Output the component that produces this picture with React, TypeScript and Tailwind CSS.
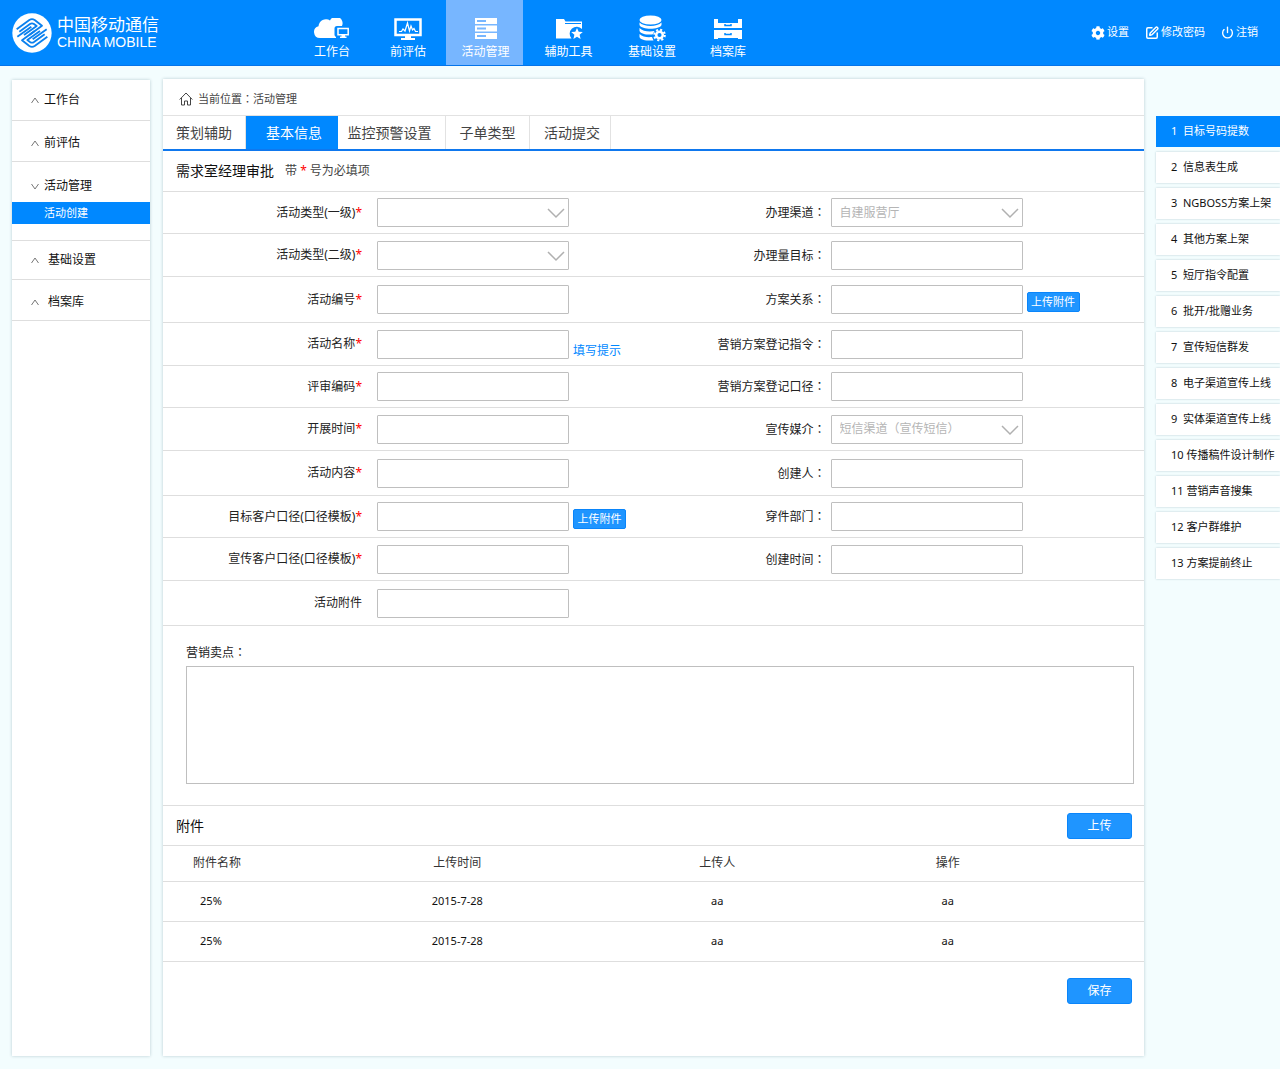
import type { ReactNode } from "react";
import { Power, SquarePen } from "lucide-react";
import { FaCog } from "react-icons/fa";

type NavItem = {
  label: string;
  icon: ReactNode;
  className: string;
};

type Field = {
  id: string;
  label: string;
  required?: boolean;
  colon?: boolean;
  options?: string[];
  extra?: "upload" | "hint";
};

type FieldRow = {
  height: string;
  left: Field;
  right?: Field;
};

const navItems: NavItem[] = [
  { label: "工作台", icon: <CloudIcon />, className: "w-[76px]" },
  { label: "前评估", icon: <PulseIcon />, className: "w-[76px]" },
  { label: "活动管理", icon: <ServerIcon />, className: "w-[77px] bg-[#77b6ff] pl-0.5" },
  { label: "辅助工具", icon: <FolderIcon />, className: "mx-[7px] w-[77px]" },
  { label: "基础设置", icon: <DatabaseIcon />, className: "w-[76px]" },
  { label: "档案库", icon: <CabinetIcon />, className: "w-[76px]" },
];

const tabs = [
  { label: "策划辅助", className: "w-[83px] border-r border-[#e2e2e2]" },
  { label: "基本信息", className: "w-[92px] bg-[#0088ff] pl-1 text-white" },
  { label: "监控预警设置", className: "w-[108px] border-r border-[#e2e2e2] pr-1" },
  { label: "子单类型", className: "w-[84px] border-r border-[#e2e2e2]" },
  { label: "活动提交", className: "w-[81px] border-r border-[#e2e2e2] pl-1" },
];

const rows: FieldRow[] = [
  {
    height: "h-[42px]",
    left: { id: "type1", label: "活动类型(一级)", required: true, options: [""] },
    right: { id: "channel", label: "办理渠道", colon: true, options: ["自建服营厅"] },
  },
  {
    height: "h-[43px]",
    left: { id: "type2", label: "活动类型(二级)", required: true, options: [""] },
    right: { id: "target", label: "办理量目标", colon: true },
  },
  {
    height: "h-[46px]",
    left: { id: "code", label: "活动编号", required: true },
    right: { id: "relation", label: "方案关系", colon: true, extra: "upload" },
  },
  {
    height: "h-[43px]",
    left: { id: "name", label: "活动名称", required: true, extra: "hint" },
    right: { id: "command", label: "营销方案登记指令", colon: true },
  },
  {
    height: "h-[42px]",
    left: { id: "review", label: "评审编码", required: true },
    right: { id: "caliber", label: "营销方案登记口径", colon: true },
  },
  {
    height: "h-[43px]",
    left: { id: "start", label: "开展时间", required: true },
    right: { id: "media", label: "宣传媒介", colon: true, options: ["短信渠道（宣传短信）"] },
  },
  {
    height: "h-[45px]",
    left: { id: "content", label: "活动内容", required: true },
    right: { id: "creator", label: "创建人", colon: true },
  },
  {
    height: "h-[42px]",
    left: { id: "targetCustomer", label: "目标客户口径(口径模板)", required: true, extra: "upload" },
    right: { id: "department", label: "穿件部门", colon: true },
  },
  {
    height: "h-[43px]",
    left: { id: "adCustomer", label: "宣传客户口径(口径模板)", required: true },
    right: { id: "created", label: "创建时间", colon: true },
  },
  {
    height: "h-[45px]",
    left: { id: "attachment", label: "活动附件" },
  },
];

const steps = [
  "目标号码提数",
  "信息表生成",
  "NGBOSS方案上架",
  "其他方案上架",
  "短厅指令配置",
  "批开/批赠业务",
  "宣传短信群发",
  "电子渠道宣传上线",
  "实体渠道宣传上线",
  "传播稿件设计制作",
  "营销声音搜集",
  "客户群维护",
  "方案提前终止",
];

const files = [
  { name: "25%", time: "2015-7-28", user: "aa", action: "aa" },
  { name: "25%", time: "2015-7-28", user: "aa", action: "aa" },
];

function Logo() {
  return (
    <svg width="40" height="40" viewBox="0 0 120 120" aria-hidden="true">
      <circle cx="60" cy="60" r="59" fill="#fff" />
      <g fill="none" stroke="#0a80ee" strokeWidth="5.500" strokeLinejoin="round">
        <path d="M14 49 52 21q8-5 16 0l22 17-38 28" />
        <path d="M106 71 68 99q-8 5-16 0L30 82l38-28" />
        <path d="M22 56 54 33q6-4 12 0l8 6-38 27" />
        <path d="M98 64 66 87q-6 4-12 0l-8-6 38-27" />
        <path d="M104 49 62 79" />
        <path d="M16 71 58 41" />
      </g>
    </svg>
  );
}

function CloudIcon() {
  return (
    <svg width="36" height="22" viewBox="0 0 36 22" aria-hidden="true">
      <path
        fill="#fff"
        d="M6 20a6 6 0 0 1-1.500-11.800A7.500 7.500 0 0 1 16 2.500 6.500 6.500 0 0 1 28 8h-5a2.500 2.500 0 0 0-2.500 2.500v6A2.500 2.500 0 0 0 22 19v1z"
      />
      <path fill="none" stroke="#fff" strokeWidth="1.500" d="M24 10.500h10.200v6.300H24z" />
      <path fill="#fff" d="M27.500 17h3.500v1.500h1.500V20h-6.500v-1.500h1.500z" />
    </svg>
  );
}

function PulseIcon() {
  return (
    <svg width="28" height="22" viewBox="0 0 28 22" aria-hidden="true">
      <path fill="none" stroke="#fff" strokeWidth="2.500" d="M1.500 1.500h25v15.500h-25z" />
      <path
        fill="none"
        stroke="#fff"
        strokeWidth="1.200"
        d="M5 13.500h2.500L9 11l2 2 2.500-8 2 8 1.500-5 1.500 4 1.500-1.500 1.500 3H24"
      />
      <path fill="#fff" d="M11 18h6v2h4v2H7v-2h4z" />
    </svg>
  );
}

function ServerIcon() {
  return (
    <svg width="24" height="22" viewBox="0 0 24 22" aria-hidden="true">
      <path fill="#fff" d="M1 0h22v6H1zM1 7.500h22v6H1zM1 15h22v6H1z" />
      <path stroke="#77b6ff" strokeWidth="2" d="M3 3h9M3 10.500h9M3 18h9" />
    </svg>
  );
}

function FolderIcon() {
  return (
    <svg width="28" height="22" viewBox="0 0 28 22" aria-hidden="true">
      <path fill="#fff" d="M1 1h8l1.500 2.500H27V11a7 7 0 0 0-10.500 9.500H1z" />
      <path stroke="#0088ff" d="M10 5.500h16" />
      <path
        fill="#fff"
        d="m22 10 1.700 3.800 4.100.3-3.200 2.700 1 4.200-3.600-2.300-3.600 2.300 1-4.200-3.200-2.700 4.100-.3z"
      />
    </svg>
  );
}

function DatabaseIcon() {
  return (
    <svg width="27" height="27" viewBox="0 0 27 27" aria-hidden="true">
      <ellipse cx="11.500" cy="5" rx="11" ry="4.500" fill="#fff" />
      <path fill="#fff" d="M.5 7.500c4 4.500 18 4.500 22 0V10c-2 5-20 5-22 0z" />
      <path fill="#fff" d="M.5 13c3 3.500 10 4 15 3l-2 3.500C8 20 2 19 .5 16z" />
      <path fill="#fff" d="M.5 19c3 3 8 3.500 12.500 3l1.500 3.500C8 26 1.500 25 .5 22z" />
      <circle cx="20.500" cy="20" r="3.300" fill="none" stroke="#fff" strokeWidth="2.500" />
      <circle cx="20.500" cy="20" r="5.300" fill="none" stroke="#fff" strokeWidth="2" strokeDasharray="2.080 2.080" />
    </svg>
  );
}

function CabinetIcon() {
  return (
    <svg width="28" height="22" viewBox="0 0 28 22" aria-hidden="true">
      <path fill="#fff" d="M0 1h4v3h20V1h4v9H0zM0 12h28v9h-4v-1H4v1H0z" />
      <path stroke="#0088ff" d="M4 4.500h20M4 20.500h20" />
      <path fill="none" stroke="#0088ff" strokeWidth="1.500" d="M11 6v1.500h6V6M11 15v1.500h6V15" />
    </svg>
  );
}

function HomeIcon() {
  return (
    <svg width="14" height="14" viewBox="0 0 14 14" fill="none" stroke="#444" aria-hidden="true">
      <path d="M.7 7.500 7 1l6.300 6.500M2.500 6v7h3V9h3v4h3V6" />
    </svg>
  );
}

function Arrow({ down = false }: { down?: boolean }) {
  return (
    <svg width="8" height="8" viewBox="0 0 8 8" fill="none" stroke="#777" aria-hidden="true">
      <path d={down ? "M.5 2 4 7l3.500-5" : "M.5 7 4 2l3.500 5"} />
    </svg>
  );
}

// the TC face sets the colon in the middle of its box
function Colon() {
  return <span className="font-['Noto_Sans_CJK_TC',sans-serif]">：</span>;
}

function UploadButton() {
  return (
    <button
      type="button"
      className="mb-0.5 h-5 w-[53px] rounded-xs border border-[#0a85fa] bg-[#1f95ff] text-[11px] leading-4 text-white"
    >
      上传附件
    </button>
  );
}

function FormField({ field, labelClass, gapClass }: { field: Field; labelClass: string; gapClass: string }) {
  return (
    <div className={`flex items-center ${gapClass}`}>
      <label htmlFor={field.id} className={`shrink-0 text-right text-xs text-[#222] ${labelClass}`}>
        {field.label}
        {field.colon && <Colon />}
        {field.required && <span className="text-[#ff0000]">*</span>}
      </label>
      <div className="flex items-end gap-1">
        {field.options ? (
          <div className="relative">
            <select
              id={field.id}
              className="block h-[29px] w-48 appearance-none rounded-[1px] border border-[#bfbfbf] bg-white pr-7 pl-2 text-xs text-[#b5b5b5]"
            >
              {field.options.map((option) => (
                <option key={option}>{option}</option>
              ))}
            </select>
            <svg
              className="pointer-events-none absolute top-[10px] right-1"
              width="18"
              height="11"
              viewBox="0 0 18 11"
              fill="none"
              stroke="#b0b0b0"
              strokeWidth="1.500"
              aria-hidden="true"
            >
              <path d="M1 1l8 8 8-8" />
            </svg>
          </div>
        ) : (
          <input
            type="text"
            id={field.id}
            className="h-[29px] w-48 rounded-[1px] border border-[#bfbfbf] bg-white px-2 text-xs"
          />
        )}
        {field.extra === "upload" && <UploadButton />}
        {field.extra === "hint" && (
          <a href="#hint" className="text-xs leading-4 text-[#0088ff]">
            填写提示
          </a>
        )}
      </div>
    </div>
  );
}

function Header() {
  return (
    <header className="flex h-[66px] border-b border-[#0575ea] bg-[#0088ff] text-white">
      <a href="#home" className="flex w-[294px] shrink-0 items-center gap-[5px] pl-3">
        <Logo />
        <span>
          <span className="block text-[17px] leading-[18px]">中国移动通信</span>
          <span className="block font-['Liberation_Sans',sans-serif] text-sm leading-4">CHINA MOBILE</span>
        </span>
      </a>
      <nav className="flex">
        {navItems.map((item) => (
          <a
            key={item.label}
            href="#nav"
            className={`flex flex-col items-center gap-0.5 pt-[15px] text-xs leading-4 ${item.className}`}
          >
            <span className="flex h-[27px] items-center">{item.icon}</span>
            {item.label}
          </a>
        ))}
      </nav>
      <div className="ml-auto flex items-center gap-4 pr-[22px] text-[11px]">
        <a href="#settings" className="flex items-center gap-0.5">
          <FaCog size={14} />
          设置
        </a>
        <a href="#password" className="flex items-center gap-0.5">
          <SquarePen size={14} strokeWidth={2.5} />
          修改密码
        </a>
        <a href="#logout" className="flex items-center gap-0.5">
          <Power size={13} strokeWidth={2.5} />
          注销
        </a>
      </div>
    </header>
  );
}

function Sidebar() {
  const item = "flex items-center border-b border-[#dedede] pl-[19px] text-xs";
  return (
    <aside className="mt-px w-[138px] shrink-0 bg-white shadow-[0_0_3px_rgba(0,60,80,0.25)]">
      <a href="#desk" className={`${item} h-[41px] gap-[5px]`}>
        <Arrow />
        工作台
      </a>
      <a href="#assess" className={`${item} h-[41px] gap-[5px] pt-1`}>
        <Arrow />
        前评估
      </a>
      <div className="border-b border-[#dedede] pt-2 pb-4">
        <a href="#activity" className="flex h-8 items-center gap-[5px] pl-[19px] text-xs">
          <Arrow down />
          活动管理
        </a>
        <a href="#create" className="block bg-[#0088ff] pl-8 text-[11px] leading-[22px] text-white">
          活动创建
        </a>
      </div>
      <a href="#base" className={`${item} h-[39px] gap-[9px]`}>
        <Arrow />
        基础设置
      </a>
      <a href="#archive" className={`${item} h-[41px] gap-[9px] pt-1`}>
        <Arrow />
        档案库
      </a>
    </aside>
  );
}

function Attachments() {
  return (
    <section>
      <div className="flex h-[41px] items-center justify-between border-y border-[#dedede] pr-3 pl-[13px]">
        <h2 className="text-sm text-[#111]">附件</h2>
        <button
          type="button"
          className="h-[26px] w-[65px] rounded-[3px] border border-[#0a85fa] bg-[#1f95ff] text-xs text-white"
        >
          上传
        </button>
      </div>
      <table className="w-full table-fixed text-center text-[11px] text-[#111]">
        <colgroup>
          <col className="w-[11%]" />
          <col className="w-[38%]" />
          <col className="w-[15%]" />
          <col className="w-[32%]" />
          <col className="w-[4%]" />
        </colgroup>
        <thead>
          <tr className="h-[35px] border-b border-[#dedede] text-xs text-[#333]">
            <th className="font-normal">附件名称</th>
            <th className="font-normal">上传时间</th>
            <th className="font-normal">上传人</th>
            <th className="font-normal">操作</th>
            <td />
          </tr>
        </thead>
        <tbody>
          {files.map((file, index) => (
            <tr key={index} className="h-10 border-b border-[#dedede]">
              <td className="pr-3">{file.name}</td>
              <td>{file.time}</td>
              <td>{file.user}</td>
              <td>{file.action}</td>
              <td />
            </tr>
          ))}
        </tbody>
      </table>
    </section>
  );
}

export default function App() {
  return (
    <div className="min-h-screen bg-[#f3fdfe] font-['Noto_Sans','Noto_Sans_CJK_SC',sans-serif] text-[#111]">
      <Header />
      <div className="flex pt-[13px] pb-[14px]">
        <div className="flex w-[163px] shrink-0 pl-3">
          <Sidebar />
        </div>
        <main className="min-w-0 flex-1 bg-white pb-[52px] shadow-[0_0_3px_rgba(0,60,80,0.25)]">
          <div className="flex h-9 items-center gap-[5px] pt-1 pl-4 text-[11px] text-[#444]">
            <HomeIcon />
            <p>
              当前位置
              <Colon />
              活动管理
            </p>
          </div>
          <div className="flex h-9 border-t border-b-2 border-t-[#e2e2e2] border-b-[#0f78ee] text-sm text-[#444]">
            {tabs.map((tab) => (
              <button key={tab.label} type="button" className={tab.className}>
                {tab.label}
              </button>
            ))}
          </div>
          <form>
            <div className="flex h-[41px] items-center gap-[11px] border-b border-[#dedede] pl-[13px]">
              <h1 className="text-sm text-[#111]">需求室经理审批</h1>
              <p className="text-xs text-[#444]">
                带 <span className="text-[#ff0000]">*</span> 号为必填项
              </p>
            </div>
            {rows.map((row) => (
              <div key={row.left.id} className={`grid grid-cols-2 border-b border-[#dedede] ${row.height}`}>
                <FormField field={row.left} labelClass="w-[199px]" gapClass="gap-[15px]" />
                {row.right && <FormField field={row.right} labelClass="w-[172px]" gapClass="gap-[5px]" />}
              </div>
            ))}
            <div className="pt-4 pr-[10px] pb-[21px] pl-[23px]">
              <label htmlFor="selling" className="mb-[3px] block text-xs leading-5 text-[#222]">
                营销卖点
                <Colon />
              </label>
              <textarea id="selling" className="block h-[118px] w-full resize-none border border-[#bfbfbf] p-2 text-xs" />
            </div>
            <Attachments />
            <div className="flex justify-end pt-4 pr-3">
              <button
                type="submit"
                className="h-[26px] w-[65px] rounded-[3px] border border-[#0a85fa] bg-[#1f95ff] text-xs text-white"
              >
                保存
              </button>
            </div>
          </form>
        </main>
        <ol className="ml-3 flex w-[124px] shrink-0 flex-col gap-[5px] pt-[37px] text-[11px]">
          {steps.map((step, index) => (
            <li key={step}>
              <a
                href="#step"
                className={`flex h-[31px] items-center gap-[3px] pl-[15px] whitespace-nowrap ${
                  index === 0 ? "bg-[#0088ff] text-white" : "bg-white shadow-[0_0_2px_rgba(0,60,80,0.25)]"
                }`}
              >
                <span className="min-w-[9px]">{index + 1}</span>
                {step}
              </a>
            </li>
          ))}
        </ol>
      </div>
    </div>
  );
}
